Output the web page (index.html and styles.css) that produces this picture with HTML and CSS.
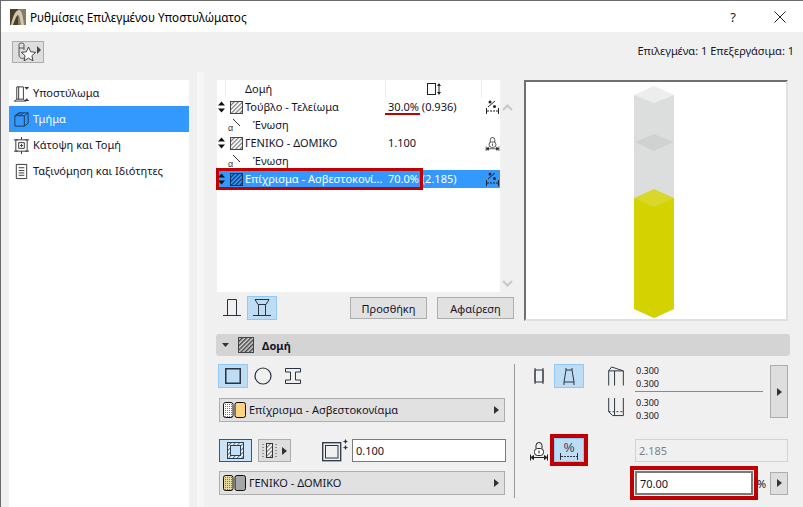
FILE: index.html
```html
<!DOCTYPE html>
<html lang="el">
<head>
<meta charset="utf-8">
<title>Ρυθμίσεις Επιλεγμένου Υποστυλώματος</title>
<link rel="stylesheet" href="styles.css">
</head>
<body>
<svg class="defs" width="0" height="0" aria-hidden="true">
  <defs>
    <pattern id="hatch" width="3" height="3" patternUnits="userSpaceOnUse" patternTransform="rotate(45)">
      <rect width="3" height="3" fill="#fff"/><rect width="1.2" height="3" fill="#777"/>
    </pattern>
    <pattern id="hatchsel" width="3" height="3" patternUnits="userSpaceOnUse" patternTransform="rotate(45)">
      <rect width="3" height="3" fill="#3399ff"/><rect width="1.2" height="3" fill="#12305a"/>
    </pattern>
    <pattern id="hatchdark" width="3" height="3" patternUnits="userSpaceOnUse" patternTransform="rotate(45)">
      <rect width="3" height="3" fill="#d8d8d8"/><rect width="1.5" height="3" fill="#444"/>
    </pattern>
    <pattern id="dots" width="2" height="2" patternUnits="userSpaceOnUse">
      <rect width="2" height="2" fill="#fff"/><rect width="1" height="1" fill="#777"/>
    </pattern>
    <pattern id="dotsy" width="2" height="2" patternUnits="userSpaceOnUse">
      <rect width="2" height="2" fill="#e6d9a0"/><rect width="1" height="1" fill="#777"/>
    </pattern>
    <symbol id="handle" viewBox="0 0 7 12"><path d="M3.500 0.500 7 4.500H0zM0 7.500h7L3.500 11.500z" fill="#111"/></symbol>
    <symbol id="join" viewBox="0 0 16 16"><path d="M6 2 13 9" stroke="#333" fill="none"/><text x="1" y="14" font-size="9" font-family="Liberation Sans" fill="#333">α</text></symbol>
    <symbol id="pct" viewBox="0 0 15 15">
      <path d="M1.500 8v6M13.500 8v6" stroke="#222" fill="none"/>
      <path d="M2 11h11" stroke="#222" fill="none" stroke-dasharray="2 1"/>
      <path d="M3 7 10 1" stroke="#222" fill="none"/><circle cx="5" cy="2" r="1.500" fill="#222"/><circle cx="9.500" cy="6.500" r="1.500" fill="#222"/>
    </symbol>
    <symbol id="lock" viewBox="0 0 18 20">
      <path d="M6 8V5a3 3 0 0 1 6 0v3" fill="none" stroke="#222"/><rect x="4.500" y="8" width="9" height="7" rx="3" fill="#fff" stroke="#222"/><path d="M9 10v3" stroke="#222"/>
      <path d="M0.500 14v6M17.500 14v6M1 17h16M1 17l2.500-2v4zM17 17l-2.500-2v4z" stroke="#222" fill="#222"/>
    </symbol>
  </defs>
</svg>
<div class="window">
  <header class="titlebar">
    <svg class="app-icon" viewBox="0 0 16 16"><rect width="16" height="16" fill="#4a3d2c"/><rect x="8" width="8" height="16" fill="#8a7a60"/><path d="M1 16C3 6 6 1 9 1c3 0 4 7 5 15h-3C10 9 9 6 8 6c-1 0-3 4-5 10z" fill="#cfc7b4"/></svg>
    <span class="title">Ρυθμίσεις Επιλεγμένου Υποστυλώματος</span>
    <span class="help">?</span>
    <svg class="close" viewBox="0 0 12 12"><path d="M.5.500l11 11M11.500.5l-11 11" stroke="#222" fill="none"/></svg>
  </header>
  <div class="toolbar">
    <button class="fav-btn" type="button">
      <svg width="30" height="20" viewBox="0 0 30 20"><path d="M6 13V2.500a2.500 1.500 0 0 1 5 0V8M6 13c0 3 3 4 5 3" fill="none" stroke="#555"/><path d="M6 6h5" stroke="#555"/><path d="M15.500 5l2.200 4.800 5 .5-3.800 3.400 1.100 5.100-4.500-2.600-4.500 2.600 1.100-5.100-3.800-3.400 5-.5z" fill="#fff" stroke="#444"/><path d="M24 4l4 4-4 4z" fill="#444"/></svg>
    </button>
    <span class="status">Επιλεγμένα: 1 Επεξεργάσιμα: 1</span>
  </div>
  <main class="main">
    <nav class="sidebar">
      <div class="nav-item">
        <svg class="nav-icon" viewBox="0 0 18 18"><path d="M4 2h7v13H4zM6 2v13M1 17h13M4 15l-2 2M11 15l2 2" fill="none" stroke="#333"/><path d="M12 2h5l-2.500 3zM12 17h5l-2.500-3z" fill="#333"/></svg>
        <span>Υποστύλωμα</span>
      </div>
      <div class="nav-item active">
        <svg class="nav-icon" viewBox="0 0 18 18"><path d="M2 5h10v11H2zM2 5l4-3h10l-4 3M12 16l4-3V2M4 4l4-2M7 5l4-3" fill="none" stroke="#23364d"/></svg>
        <span>Τμήμα</span>
      </div>
      <div class="nav-item">
        <svg class="nav-icon" viewBox="0 0 18 18"><path d="M3 3h12v12H3zM6 6h6v6H6zM1 3h4M13 3h4M1 15h4M13 15h4M9 0v3M9 15v3" fill="none" stroke="#333"/><path d="M9 7.500v3M7.500 9h3" stroke="#333"/></svg>
        <span>Κάτοψη και Τομή</span>
      </div>
      <div class="nav-item">
        <svg class="nav-icon" viewBox="0 0 18 18"><path d="M3.500 1.500h11v15h-11z" fill="none" stroke="#333"/><path d="M6 5h6M6 8h6M6 10.500h6M6 13h6" stroke="#333"/></svg>
        <span>Ταξινόμηση και Ιδιότητες</span>
      </div>
    </nav>
    <div class="strip"></div>
    <section class="content">
      <div class="top">
        <div class="structure">
          <div class="list-wrap">
            <div class="list">
              <div class="row head">
                <span class="c-handle"></span>
                <span class="c-icon"></span>
                <span class="c-name head-name">Δομή</span>
                <span class="c-val head-val">
                  <svg width="14" height="12" viewBox="0 0 14 12"><rect x=".5" y=".5" width="8" height="11" fill="none" stroke="#222"/><path d="M12 0l2 3h-4zM12 12l2-3h-4z" fill="#222"/><path d="M12 2v8" stroke="#222"/></svg>
                </span>
                <span class="c-end"></span>
              </div>
              <div class="row">
                <svg class="handle"><use href="#handle"/></svg>
                <svg class="hatch" viewBox="0 0 13 13"><rect x=".5" y=".5" width="12" height="12" fill="url(#hatch)" stroke="#444"/></svg>
                <span class="c-name">Τούβλο - Τελείωμα</span>
                <span class="c-val"><span class="underlined">30.0%</span> (0.936)</span>
                <svg class="row-end"><use href="#pct"/></svg>
              </div>
              <div class="row join">
                <svg class="join-icon"><use href="#join"/></svg>
                <span>Ένωση</span>
              </div>
              <div class="row">
                <svg class="handle"><use href="#handle"/></svg>
                <svg class="hatch" viewBox="0 0 13 13"><rect x=".5" y=".5" width="12" height="12" fill="url(#hatch)" stroke="#444"/></svg>
                <span class="c-name">ΓΕΝΙΚΟ - ΔΟΜΙΚΟ</span>
                <span class="c-val">1.100</span>
                <svg class="row-end"><use href="#lock"/></svg>
              </div>
              <div class="row join">
                <svg class="join-icon"><use href="#join"/></svg>
                <span>Ένωση</span>
              </div>
              <div class="row selected">
                <svg class="handle"><use href="#handle"/></svg>
                <svg class="hatch" viewBox="0 0 13 13"><rect x=".5" y=".5" width="12" height="12" fill="url(#hatchsel)" stroke="#12305a"/></svg>
                <span class="c-name">Επίχρισμα - Ασβεστοκονί...</span>
                <span class="c-val">70.0% (2.185)</span>
                <svg class="row-end"><use href="#pct"/></svg>
              </div>
              <div class="red-box"></div>
            </div>
            <div class="scroll">
              <svg width="11" height="7" viewBox="0 0 11 7"><path d="M1 6l4.500-4.500L10 6" fill="none" stroke="#c8c8c8" stroke-width="2"/></svg>
              <svg width="11" height="7" viewBox="0 0 11 7"><path d="M1 1l4.500 4.500L10 1" fill="none" stroke="#c8c8c8" stroke-width="2"/></svg>
            </div>
          </div>
          <div class="list-actions">
            <span class="tool plain">
              <svg width="20" height="20" viewBox="0 0 20 20"><path d="M5.500 17V1.500h9V17M1 17.500h18" fill="none" stroke="#2a3440"/></svg>
            </span>
            <span class="tool on">
              <svg width="20" height="20" viewBox="0 0 20 20"><path d="M3 1.500h14l-3 5H6zM6.500 6.500h7v11h-7zM1 17.500h18" fill="none" stroke="#2a3440"/></svg>
            </span>
            <button class="btn first" type="button">Προσθήκη</button>
            <button class="btn" type="button">Αφαίρεση</button>
          </div>
        </div>
        <div class="preview">
          <svg viewBox="526 82 260 237" width="260" height="237">
            <path d="M634 95v214l20 9 20-9V95z" fill="#dcdede"/>
            <path d="M634 95l20-9 20 9-20 8z" fill="#eceeee"/>
            <path d="M635 142l19-8 20 8-20 9z" fill="#d0d2d2"/>
            <path d="M634 198v111l20 9 20-9V198z" fill="#d4d200"/>
            <path d="M634 198l20-9 20 9-20 9z" fill="#d8d72a"/>
          </svg>
        </div>
      </div>
      <div class="section-bar">
        <svg class="tri" width="7" height="4" viewBox="0 0 7 4"><path d="M0 0h7L3.500 4z" fill="#333"/></svg>
        <svg width="16" height="16" viewBox="0 0 16 16"><rect x=".5" y=".5" width="15" height="15" fill="url(#hatchdark)" stroke="#444"/></svg>
        <b>Δομή</b>
      </div>
      <div class="props">
        <div class="props-left">
          <div class="shape-row">
            <span class="tool on wide"><svg width="16" height="16" viewBox="0 0 16 16"><rect x=".75" y=".75" width="14.500" height="14.500" fill="none" stroke="#2a3440" stroke-width="1.500"/></svg></span>
            <span class="tool"><svg width="18" height="18" viewBox="0 0 18 18"><circle cx="9" cy="9" r="8" fill="none" stroke="#2a3440" stroke-width="1.200"/></svg></span>
            <span class="tool"><svg width="16" height="16" viewBox="0 0 16 16"><path d="M.5.500h15v3.500h-5v8h5v3.500H.5V12h5V4h-5z" fill="none" stroke="#2a3440"/></svg></span>
          </div>
          <div class="selector sel-first">
            <svg width="23" height="16" viewBox="0 0 23 16"><rect x=".5" y=".5" width="9.500" height="15" rx="2" fill="url(#dots)" stroke="#111"/><rect x="12" y=".5" width="10.500" height="15" rx="2" fill="#fdd37f" stroke="#111"/></svg>
            <span>Επίχρισμα - Ασβεστοκονίαμα</span>
            <svg class="arrow" width="5" height="8" viewBox="0 0 5 8"><path d="M0 0l5 4-5 4z" fill="#333"/></svg>
          </div>
          <div class="core-row">
            <span class="core-on">
              <svg width="17" height="17" viewBox="0 0 17 17"><rect x=".5" y=".5" width="16" height="16" fill="url(#hatch)" stroke="#22405f"/><rect x="3.500" y="3.500" width="10" height="10" fill="#c5e1f8" stroke="#22405f"/></svg>
            </span>
            <span class="core-opt">
              <svg width="15" height="15" viewBox="0 0 15 15"><path d="M1 1v13M14 1v13" stroke="#444" stroke-dasharray="1 2" fill="none"/><rect x="4.500" y=".5" width="6" height="14" fill="url(#hatch)" stroke="#333"/></svg>
              <svg width="5" height="8" viewBox="0 0 5 8"><path d="M0 0l5 4-5 4z" fill="#333"/></svg>
            </span>
            <svg class="thick-icon" width="26" height="24" viewBox="0 0 26 24"><rect x=".7" y="3.700" width="18" height="18" fill="none" stroke="#2a3440" stroke-width="1.300"/><rect x="3.500" y="6.500" width="12.500" height="12.500" fill="none" stroke="#2a3440"/><path d="M23.500 0l1 2 2 .5-2 .5-1 2-1-2-2-.5 2-.5zM23.500 6l1 2 2 .5-2 .5-1 2-1-2-2-.5 2-.5z" fill="#2a3440"/></svg>
            <div class="field thick">0.100</div>
          </div>
          <div class="selector sel-second">
            <svg width="23" height="16" viewBox="0 0 23 16"><rect x=".5" y=".5" width="9.500" height="15" rx="2" fill="url(#dotsy)" stroke="#111"/><rect x="12" y=".5" width="10.500" height="15" rx="2" fill="#a6a6a6" stroke="#111"/></svg>
            <span>ΓΕΝΙΚΟ - ΔΟΜΙΚΟ</span>
            <svg class="arrow" width="5" height="8" viewBox="0 0 5 8"><path d="M0 0l5 4-5 4z" fill="#333"/></svg>
          </div>
        </div>
        <div class="props-right">
          <div class="r-row1">
            <span class="tool plain r-first"><svg width="10" height="18" viewBox="0 0 10 18"><path d="M1 3h8v12H1zM1 1v16M9 1v16" fill="none" stroke="#2a3440"/></svg></span>
            <span class="tool on"><svg width="12" height="18" viewBox="0 0 12 18"><path d="M3 3h6l2 12H1zM3 1v2M9 1v2M1 15v3M11 15v3" fill="none" stroke="#2a3440"/></svg></span>
            <div class="corner-icons">
              <svg width="17" height="21" viewBox="0 0 17 21"><path d="M.5 20V5L3.500 1 15.500 5v15M.5 5h15M6.500 5v15" fill="none" stroke="#2a3440"/></svg>
              <svg width="17" height="21" viewBox="0 0 17 21"><path d="M.5 0v14l4 4h11V0M6.500 0v18" fill="none" stroke="#2a3440"/><path d="M.5 14h15" fill="none" stroke="#2a3440" stroke-dasharray="2 2"/></svg>
            </div>
            <div class="dims">
              <div class="dim-top"><span>0.300</span><span>0.300</span></div>
              <div class="dim-bot"><span>0.300</span><span>0.300</span></div>
            </div>
            <span class="side-btn tall"><svg width="5" height="8" viewBox="0 0 5 8"><path d="M0 0l5 4-5 4z" fill="#333"/></svg></span>
          </div>
          <div class="r-row2">
            <svg class="lock-icon" width="18" height="21"><use href="#lock"/></svg>
            <span class="tool on pct-on">
              <svg width="20" height="20" viewBox="0 0 20 20"><text x="10" y="12" text-anchor="middle" font-size="12" font-family="Liberation Sans" fill="#2a3440">%</text><path d="M1.500 13v7M18.500 13v7" fill="none" stroke="#2a3440"/><path d="M2 16.500h16" fill="none" stroke="#2a3440" stroke-dasharray="2 1"/></svg>
            </span>
            <div class="field disabled">2.185</div>
          </div>
          <div class="r-row3">
            <div class="field pct-field">70.00</div>
            <span class="unit">%</span>
            <span class="side-btn"><svg width="5" height="8" viewBox="0 0 5 8"><path d="M0 0l5 4-5 4z" fill="#333"/></svg></span>
          </div>
        </div>
      </div>
    </section>
  </main>
</div>
</body>
</html>
```
FILE: styles.css
```css
* { box-sizing: border-box; }
html, body { margin: 0; padding: 0; }
body {
  width: 803px;
  height: 507px;
  overflow: hidden;
  font-family: "Noto Sans", "Liberation Sans", sans-serif;
  font-size: 11px;
  color: #14142b;
}
.defs { position: absolute; }
.window {
  width: 803px;
  height: 507px;
  display: flex;
  flex-direction: column;
  background: #f0f0f0;
  border-left: 1px solid #6b6b6b;
  border-top: 1px solid #6b6b6b;
  overflow: hidden;
}
.titlebar {
  height: 31px;
  flex: none;
  background: #fff;
  display: flex;
  align-items: center;
  padding: 0 17px 0 9px;
}
.app-icon { width: 16px; height: 16px; }
.title { margin-left: 4px; font-size: 11.700px; flex: 1; color: #000; }
.help { font-size: 13px; margin-right: 38px; color: #222; }
.close { width: 12px; height: 12px; }
.toolbar {
  height: 40px;
  flex: none;
  display: flex;
  justify-content: space-between;
  align-items: flex-start;
  padding: 9px 9px 0 11px;
}
.fav-btn {
  width: 32px;
  height: 22px;
  padding: 0;
  background: #dedede;
  border: 1px solid #adadad;
  display: flex;
  align-items: center;
  justify-content: center;
}
.status { margin-top: 2px; font-size: 11px; }
.main { flex: 1; display: flex; padding-left: 8px; min-height: 0; }
.sidebar {
  width: 180px;
  margin-top: 8px;
  background: #fff;
  flex: none;
}
.nav-item {
  height: 26px;
  display: flex;
  align-items: center;
  padding-left: 4px;
  gap: 3px;
}
.nav-item span { padding-bottom: 2px; }
.nav-item.active { background: #3399ff; color: #fff; }
.nav-icon { width: 17px; height: 17px; flex: none; }
.strip { width: 7px; margin-left: 8px; background: #f6f6f6; flex: none; }
.content { width: 574px; margin-left: 12px; padding-top: 8px; flex: none; }
.top { display: flex; height: 241px; }
.structure { width: 297px; margin-left: 1px; flex: none; }
.list-wrap { display: flex; height: 212px; }
.list { position: relative; width: 283px; background: #fff; }
.row { height: 18px; display: flex; align-items: center; }
.c-handle { width: 9px; height: 100%; border-right: 1px solid #ececec; }
.c-icon { width: 19px; }
.handle { width: 7px; height: 12px; margin-left: 1px; margin-right: 5px; flex: none; }
.hatch { width: 13px; height: 13px; margin-right: 2px; flex: none; }
.c-name { width: 141px; flex: none; white-space: nowrap; overflow: hidden; padding-bottom: 2px; }
.head .c-name { height: 100%; line-height: 18px; padding-bottom: 0; border-right: 1px solid #ececec; }
.c-val { width: 97px; flex: none; padding-left: 2px; padding-bottom: 2px; white-space: nowrap; }
.head-val {
  display: flex;
  justify-content: center;
  align-items: center;
  width: 96px;
  height: 100%;
  padding: 0;
  border-right: 1px solid #ececec;
}
.underlined { position: relative; }
.underlined::after {
  content: "";
  position: absolute;
  left: -3px;
  right: -1px;
  bottom: -1px;
  height: 2px;
  background: #c00000;
}
.row-end { width: 15px; height: 15px; margin-left: 2px; flex: none; }
.row.join { gap: 10px; padding-left: 10px; }
.row.join span { padding-bottom: 2px; }
.join-icon { width: 16px; height: 16px; flex: none; }
.row.selected { background: #3399ff; color: #fff; }
.red-box {
  position: absolute;
  left: -1px;
  top: 88px;
  width: 207px;
  height: 22px;
  border: 3px solid #c00000;
}
.scroll {
  width: 14px;
  padding: 24px 0 5px 1px;
  display: flex;
  flex-direction: column;
  justify-content: space-between;
  align-items: center;
}
.list-actions { display: flex; align-items: center; margin-top: 4px; height: 24px; }
.tool {
  width: 30px;
  height: 24px;
  display: flex;
  align-items: center;
  justify-content: center;
  flex: none;
  border: 1px solid transparent;
}
.tool.on { background: #bfdcf5; border-color: #90c8f6; }
.btn {
  width: 78px;
  height: 22px;
  padding: 0;
  background: #e1e1e1;
  border: 1px solid #adadad;
  font: inherit;
  color: inherit;
}
.btn.first { margin-left: 73px; margin-right: 10px; }
.preview {
  width: 264px;
  height: 241px;
  margin-left: 10px;
  background: #fff;
  border: 2px solid #e0e0e0;
  border-top-color: #707070;
  border-left-color: #707070;
  flex: none;
}
.preview svg { display: block; }
.section-bar {
  height: 22px;
  margin-top: 13px;
  background: #d4d4d4;
  border-radius: 3px;
  display: flex;
  align-items: center;
  padding-left: 6px;
}
.tri { margin-right: 9px; }
.section-bar b { margin-left: 8px; font-size: 11px; }
.props { display: flex; margin-top: 8px; }
.props-left {
  width: 299px;
  height: 134px;
  padding-left: 3px;
  border-right: 1px solid #9a9a9a;
  flex: none;
}
.shape-row { display: flex; margin-left: -1px; }
.selector {
  width: 286px;
  height: 24px;
  background: #e1e1e1;
  border: 1px solid #adadad;
  display: flex;
  align-items: center;
  padding: 0 5px 0 3px;
  gap: 3px;
}
.selector span { flex: 1; padding-bottom: 2px; }
.sel-first { margin-top: 10px; }
.sel-second { margin-top: 9px; }
.core-row { display: flex; margin-top: 17px; height: 23px; align-items: center; width: 287px; }
.core-on {
  width: 33px;
  height: 23px;
  background: #cde4f7;
  border: 1px solid #1a5e9e;
  display: flex;
  align-items: center;
  justify-content: center;
  flex: none;
}
.core-opt {
  width: 33px;
  height: 23px;
  margin-left: 6px;
  background: #dedede;
  border: 1px solid #adadad;
  display: flex;
  align-items: center;
  gap: 5px;
  padding-left: 3px;
  flex: none;
}
.thick-icon { margin-left: 31px; margin-right: 4px; flex: none; }
.field {
  height: 23px;
  display: flex;
  align-items: center;
  background: #fff;
  border: 1px solid #7a7a7a;
  padding-left: 3px;
}
.thick { width: 154px; }
.props-right { width: 275px; flex: none; }
.r-row1 { display: flex; height: 54px; }
.r-first { margin-left: 9px; }
.corner-icons {
  width: 17px;
  margin-left: 24px;
  padding-top: 2px;
  display: flex;
  flex-direction: column;
  gap: 11px;
  height: 54px;
  flex: none;
}
.dims { width: 128px; margin-left: 10px; font-size: 9px; line-height: 12.500px; flex: none; }
.dims span { display: block; padding-left: 1px; }
.dim-top { border-bottom: 1px solid #8a8a8a; padding: 1px 0; }
.dim-bot { padding-top: 5px; }
.side-btn {
  width: 18px;
  height: 23px;
  background: #dedede;
  border: 1px solid #adadad;
  display: flex;
  align-items: center;
  justify-content: center;
  flex: none;
}
.side-btn.tall { height: 53px; margin-left: 7px; margin-top: 1px; }
.r-row2 { display: flex; align-items: center; margin-top: 20px; height: 24px; }
.lock-icon { margin-left: 15px; margin-right: 6px; flex: none; }
.pct-on { outline: 4px solid #c00000; }
.disabled {
  width: 153px;
  margin-left: 51px;
  background: #f0f0f0;
  border: 1px solid #d3d3d3;
  color: #808080;
}
.r-row3 { display: flex; align-items: center; margin-top: 9px; margin-left: 120px; height: 24px; }
.pct-field { width: 118px; height: 24px; border: 2px solid #7a7a7a; outline: 4px solid #c00000; outline-offset: 1px; }
.unit { width: 17px; padding-left: 4px; flex: none; }
```
